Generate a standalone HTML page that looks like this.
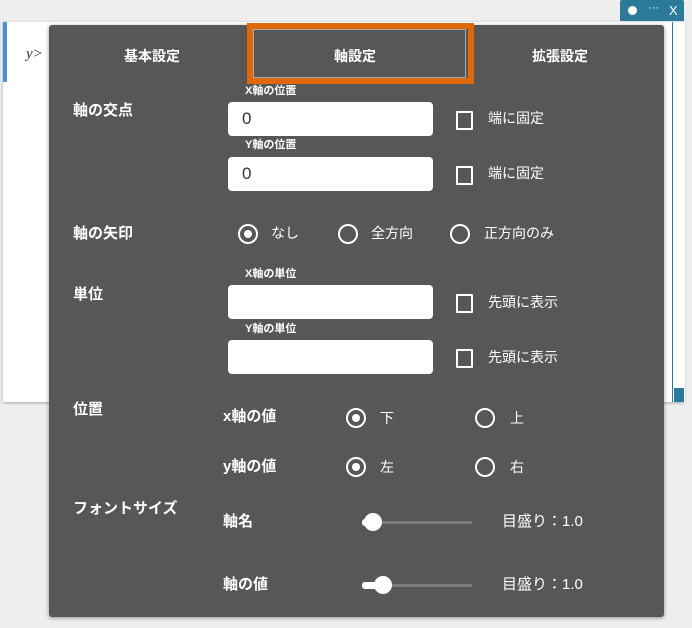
<!DOCTYPE html>
<html><head><meta charset="utf-8"><style>
body{margin:0;width:692px;height:628px;background:#eeeeee;position:relative;overflow:hidden;font-family:"Liberation Sans","Noto Sans CJK JP",sans-serif;}
.a{position:absolute}
.t{position:absolute;color:#fff;font-size:14px;font-weight:bold;white-space:nowrap;line-height:1}
.lab{font-size:15px}
.sm{font-size:11px}
.in{position:absolute;background:#fff;border-radius:4px;width:205px;height:34px;color:#333;font-size:17px;line-height:34px;box-sizing:border-box;padding-left:14px}
.cb{position:absolute;width:13px;height:15px;border:2px solid #fff;border-radius:1px}
.rd{position:absolute;width:16px;height:16px;border:2px solid #fff;border-radius:50%}
.rd.on::after{content:"";position:absolute;left:4px;top:4px;width:8px;height:8px;border-radius:50%;background:#fff}
.tr{position:absolute;height:3px;background:#7a7a7a;width:110px}
.th{position:absolute;width:18px;height:18px;border-radius:50%;background:#fff}
</style></head><body>
<div class="a" style="left:3px;top:22px;width:681px;height:380px;background:#fff;box-shadow:0 1px 3px rgba(0,0,0,.3)"></div>
<div class="a" style="left:3px;top:22px;width:4px;height:60px;background:#4a90d9"></div>
<div class="a" style="left:672px;top:22px;width:12px;height:380px;border-left:1px solid #2c7a99;background:#fff"></div>
<div class="a" style="left:674px;top:388px;width:10px;height:14px;background:#2c7a99"></div>
<div class="a" style="left:26px;top:46px;font-family:'Liberation Serif',serif;font-style:italic;font-size:15px;color:#333">y&gt;</div>
<div class="a" style="left:620px;top:0;width:64px;height:21px;background:#2c7a99;border-radius:2px 2px 0 0"></div>
<div class="a" style="left:628px;top:6px;width:9px;height:9px;border-radius:50%;background:#fff"></div>
<div class="t" style="left:648px;top:3px;font-size:11px;font-weight:normal">···</div>
<div class="t" style="left:669px;top:4px;font-size:13px;font-weight:normal">X</div>
<div class="a" style="left:49px;top:25px;width:615px;height:592px;background:#575757;border-radius:3px;box-shadow:0 1px 4px rgba(0,0,0,.4)"></div>
<div class="a" style="left:247px;top:23px;width:215px;height:49px;border:6px solid #e0680c;background:#575757"></div>
<div class="a" style="left:253px;top:29px;width:213px;height:49px;box-sizing:border-box;border:1px solid #aaa"></div>
<div class="t" style="left:124px;top:49px">基本設定</div>
<div class="t" style="left:334px;top:49px">軸設定</div>
<div class="t" style="left:532px;top:49px">拡張設定</div>

<div class="t lab" style="left:73px;top:103px">軸の交点</div>
<div class="t sm" style="left:245px;top:86px">X軸の位置</div>
<div class="in" style="left:228px;top:102px">0</div>
<div class="cb" style="left:456px;top:111px"></div><div class="t" style="left:488px;top:111px;font-weight:normal">端に固定</div>
<div class="t sm" style="left:245px;top:140px">Y軸の位置</div>
<div class="in" style="left:228px;top:157px">0</div>
<div class="cb" style="left:456px;top:166px"></div><div class="t" style="left:488px;top:166px;font-weight:normal">端に固定</div>

<div class="t lab" style="left:73px;top:226px">軸の矢印</div>
<div class="rd on" style="left:238px;top:224px"></div><div class="t" style="left:271px;top:226px;font-weight:normal">なし</div>
<div class="rd" style="left:338px;top:224px"></div><div class="t" style="left:371px;top:226px;font-weight:normal">全方向</div>
<div class="rd" style="left:450px;top:224px"></div><div class="t" style="left:484px;top:226px;font-weight:normal">正方向のみ</div>

<div class="t lab" style="left:73px;top:287px">単位</div>
<div class="t sm" style="left:245px;top:269px">X軸の単位</div>
<div class="in" style="left:228px;top:285px"></div>
<div class="cb" style="left:456px;top:294px"></div><div class="t" style="left:488px;top:295px;font-weight:normal">先頭に表示</div>
<div class="t sm" style="left:245px;top:324px">Y軸の単位</div>
<div class="in" style="left:228px;top:340px"></div>
<div class="cb" style="left:456px;top:349px"></div><div class="t" style="left:488px;top:350px;font-weight:normal">先頭に表示</div>

<div class="t lab" style="left:73px;top:402px">位置</div>
<div class="t lab" style="left:223px;top:409px">x軸の値</div>
<div class="rd on" style="left:346px;top:408px"></div><div class="t" style="left:380px;top:411px;font-weight:normal">下</div>
<div class="rd" style="left:475px;top:408px"></div><div class="t" style="left:510px;top:411px;font-weight:normal">上</div>
<div class="t lab" style="left:223px;top:459px">y軸の値</div>
<div class="rd on" style="left:346px;top:457px"></div><div class="t" style="left:380px;top:460px;font-weight:normal">左</div>
<div class="rd" style="left:475px;top:457px"></div><div class="t" style="left:510px;top:460px;font-weight:normal">右</div>

<div class="t lab" style="left:73px;top:501px">フォントサイズ</div>
<div class="t lab" style="left:223px;top:514px">軸名</div>
<div class="tr" style="left:362px;top:521px"></div>
<div class="a" style="left:362px;top:519px;width:8px;height:7px;background:#fff;border-radius:3px"></div>
<div class="th" style="left:364px;top:513px"></div>
<div class="t lab" style="left:502px;top:514px;font-weight:normal">目盛り：1.0</div>
<div class="t lab" style="left:223px;top:577px">軸の値</div>
<div class="tr" style="left:362px;top:584px"></div>
<div class="a" style="left:362px;top:582px;width:20px;height:7px;background:#fff;border-radius:3px"></div>
<div class="th" style="left:374px;top:576px"></div>
<div class="t lab" style="left:502px;top:577px;font-weight:normal">目盛り：1.0</div>
</body></html>
